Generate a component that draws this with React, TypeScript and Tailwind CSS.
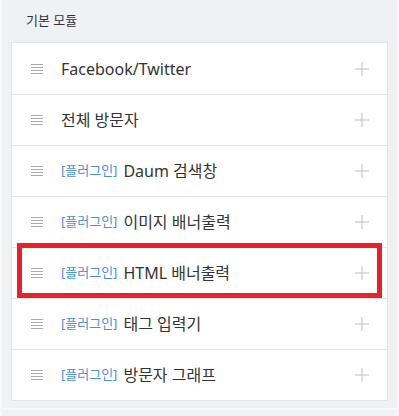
const rows: { plugin?: boolean; label: string }[] = [
  { label: "Facebook/Twitter" },
  { label: "전체 방문자" },
  { plugin: true, label: "Daum 검색창" },
  { plugin: true, label: "이미지 배너출력" },
  { plugin: true, label: "HTML 배너출력" },
  { plugin: true, label: "태그 입력기" },
  { plugin: true, label: "방문자 그래프" },
];

function Handle() {
  return (
    <div className="flex w-3 flex-col gap-[2px]">
      <span className="h-px bg-[#aaaaaa]" />
      <span className="h-px bg-[#aaaaaa]" />
      <span className="h-px bg-[#aaaaaa]" />
      <span className="h-px bg-[#aaaaaa]" />
    </div>
  );
}

function Plus() {
  return (
    <svg width="14" height="14" viewBox="0 0 14 14" className="text-[#bdbdbd]">
      <path d="M7 0v14M0 7h14" stroke="currentColor" strokeWidth="1" />
    </svg>
  );
}

export default function App() {
  return (
    <div
      className="min-h-[416px] w-[399px] bg-[#f7f8fa] px-[2px]"
      style={{ fontFamily: "'Noto Sans', 'Noto Sans CJK KR', sans-serif" }}
    >
      <div className="bg-[#f0f1f5] px-[9px] pb-[7px]">
        <div className="flex h-[42px] items-center pl-[15px] text-[13px] text-[#333]">기본 모듈</div>
        <div className="relative border border-[#e1e3e9] bg-white">
          {rows.map((r, i) => (
            <div
              key={r.label}
              className={`flex h-[51px] items-center pl-[19px] pr-[18px] ${i > 0 ? "border-t border-[#e3e5eb]" : "h-[50px]"}`}
            >
              <Handle />
              <div className="ml-[18px] flex flex-1 items-center gap-[6px]">
                {r.plugin && <span className="text-[13px] text-[#4a90d9]">[플러그인]</span>}
                <span className="text-[16px] text-[#333]">{r.label}</span>
              </div>
              <Plus />
            </div>
          ))}
          <div className="pointer-events-none absolute left-[5px] top-[200px] h-[55px] w-[365px] border-[5px] border-[#e8212b]" />
        </div>
      </div>
      <div className="mt-[2px] h-[10px] bg-[#f0f1f5]" />
    </div>
  );
}
